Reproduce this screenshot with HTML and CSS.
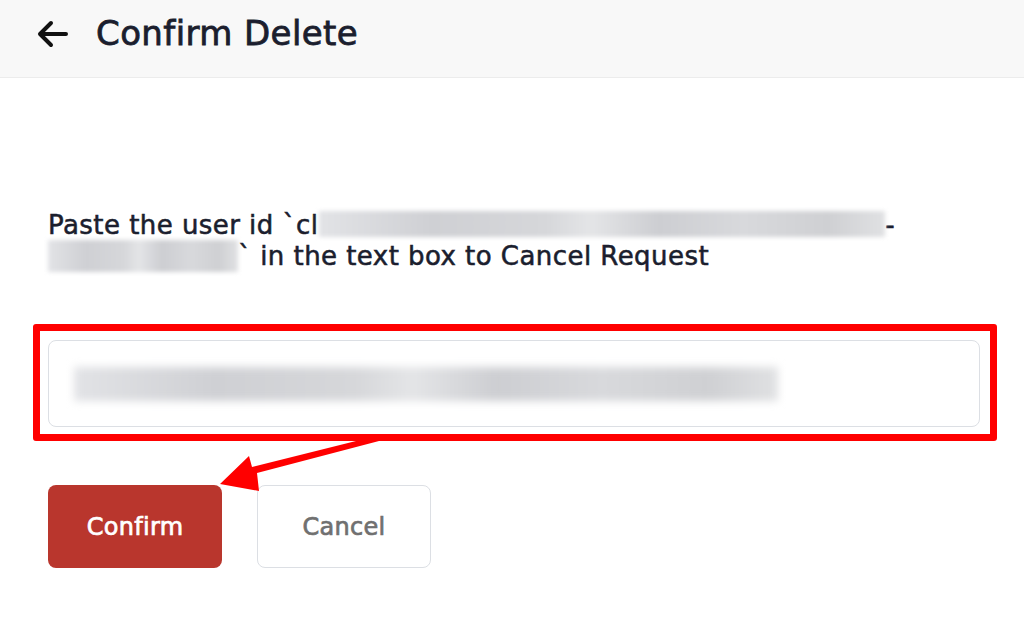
FILE: index.html
```html
<!DOCTYPE html>
<html>
<head>
<meta charset="utf-8">
<link rel="stylesheet" href="styles.css">
</head>
<body>
<header class="topbar">
  <svg class="back" viewBox="0 0 32 28" width="32" height="28" aria-hidden="true">
    <path d="M29 14H4M14 3L3 14l11 11" fill="none" stroke="#111" stroke-width="4" stroke-linecap="round" stroke-linejoin="round"/>
  </svg>
  <h1 class="title">Confirm Delete</h1>
</header>
<main class="content">
  <p class="instr">Paste the user id `cl<span class="blur b1"></span>-<br><span class="blur b2"></span>` in the text box to Cancel Request</p>
  <div class="annot-box">
    <div class="field"><span class="blur b3"></span></div>
  </div>
  <div class="actions">
    <button class="btn btn-confirm">Confirm</button>
    <button class="btn btn-cancel">Cancel</button>
  </div>
  <svg class="arrow" width="1024" height="629" viewBox="0 0 1024 629" aria-hidden="true">
    <polygon points="376,436 379,441 257,473 259,491 220,484 249,456 252,467" fill="#ff0000"/>
  </svg>
</main>
</body>
</html>
```
FILE: styles.css
```css
* { box-sizing: border-box; }
html, body { margin: 0; padding: 0; background: #fff; }
body {
  font-family: "DejaVu Sans", "Noto Sans", sans-serif;
  color: #1b1e2e;
  width: 1024px;
  height: 629px;
  overflow: hidden;
  position: relative;
}
.topbar {
  height: 78px;
  background: #f8f8f8;
  border-bottom: 1px solid #ececec;
  display: flex;
  align-items: center;
  padding-left: 37px;
  padding-bottom: 12px;
}
.back { display: block; margin-right: 27px; margin-top: 2px; }
.title {
  margin: 0;
  font-size: 34px;
  font-weight: normal;
  letter-spacing: 0.4px;
  color: #1b1e2e;
  -webkit-text-stroke: 0.8px #1b1e2e;
}
.content {
  padding: 132px 0 0 48px;
}
.instr {
  margin: 0;
  font-size: 26px;
  line-height: 31px;
  font-weight: normal;
  letter-spacing: 0.45px;
  width: 930px;
  -webkit-text-stroke: 0.55px #1b1e2e;
}
.blur {
  display: inline-block;
  vertical-align: middle;
  background: linear-gradient(90deg, #e2e3e6 0%, #cfd0d4 20%, #d6d7da 40%, #e4e5e7 48%, #cdced2 60%, #d8d9dc 75%, #cfd0d3 90%, #e0e1e3 100%);
  filter: blur(2px);
}
.b1 { width: 566px; height: 26px; margin: -6px 0 0 1px; }
.b2 { width: 190px; height: 32px; margin: -4px 0 0 0; }
.annot-box {
  margin: 52px 0 0 -15px;
  width: 964px;
  height: 117px;
  border: 7px solid #ff0000;
  border-radius: 3px;
  padding: 9px 10px 6px 8px;
}
.field {
  height: 87px;
  border: 1.5px solid #dcdfe4;
  border-radius: 8px;
  background: #fff;
  display: flex;
  align-items: center;
  padding-left: 25px;
}
.b3 { width: 704px; height: 34px; filter: blur(4px); }
.actions {
  display: flex;
  gap: 35px;
  margin-top: 44px;
}
.btn {
  height: 83px;
  width: 174px;
  border-radius: 8px;
  font-family: inherit;
  font-size: 24px;
  font-weight: normal;
  letter-spacing: 0.3px;
  -webkit-text-stroke: 0.7px currentColor;
  cursor: pointer;
}
.btn-confirm {
  background: #b9362d;
  color: #fff;
  border: none;
}
.btn-cancel {
  background: #fff;
  color: #707070;
  border: 1.5px solid #dcdfe4;
}
.arrow {
  position: absolute;
  left: 0;
  top: 0;
  pointer-events: none;
}
```
